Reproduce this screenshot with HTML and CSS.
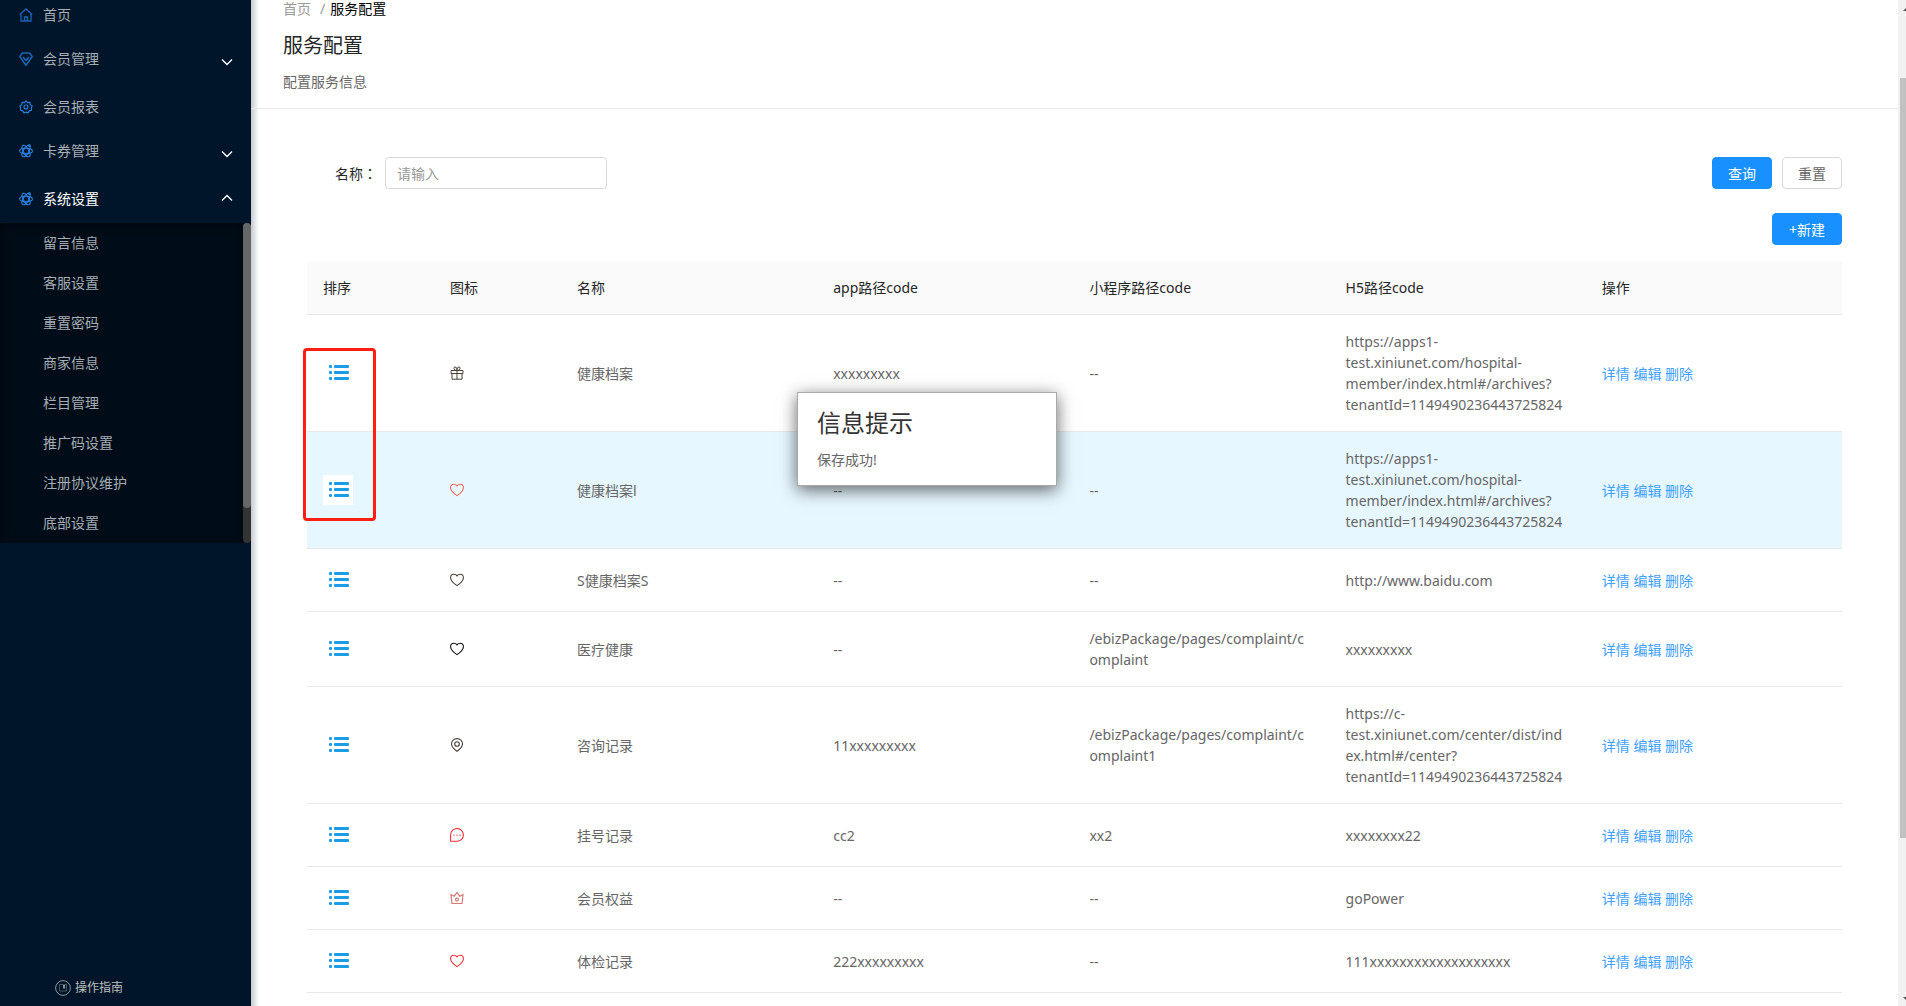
FILE: index.html
```html
<!DOCTYPE html>
<html lang="zh-CN">
<head>
<meta charset="utf-8">
<title>服务配置</title>
<link rel="stylesheet" href="styles.css">
</head>
<body>
<svg class="sprite" aria-hidden="true">
  <symbol id="i-home" viewBox="0 0 14 14"><path d="M.8 6.600 7 1l6.200 5.600M2 5.600v7.400h10V5.600M5.500 13V9h3v4" fill="none" stroke="currentColor" stroke-width="1.300"/></symbol>
  <symbol id="i-diamond" viewBox="0 0 14 14"><path d="M3.400 1h7.200L13.200 4.600 7 13.200.8 4.600zM4 5l3 3.400L10 5" fill="none" stroke="currentColor" stroke-width="1.600" stroke-linejoin="round"/></symbol>
  <symbol id="i-gear" viewBox="0 0 14 14"><path d="M7 .9 8.500 2.600 10.800 2.200 11.200 4.600 13.200 6 12.300 8 12.500 10.300 10.300 10.900 9 12.900 7 12 5 12.900 3.700 10.900 1.500 10.300 1.700 8 .8 6 2.800 4.600 3.200 2.200 5.500 2.600z" fill="none" stroke="currentColor" stroke-width="1.100" stroke-linejoin="round"/><circle cx="7" cy="7" r="2" fill="none" stroke="currentColor" stroke-width="1.100"/></symbol>
  <symbol id="i-atom" viewBox="0 0 14 14"><g fill="none" stroke="currentColor" stroke-width="1.100"><ellipse cx="7" cy="7" rx="6.400" ry="2.700"/><ellipse cx="7" cy="7" rx="6.400" ry="2.700" transform="rotate(60 7 7)"/><ellipse cx="7" cy="7" rx="6.400" ry="2.700" transform="rotate(120 7 7)"/></g><circle cx="10.400" cy="1.600" r="1.400" fill="currentColor"/></symbol>
  <symbol id="i-down" viewBox="0 0 12 12"><path d="m1 3.500 5 5 5-5" fill="none" stroke="currentColor" stroke-width="1.400"/></symbol>
  <symbol id="i-up" viewBox="0 0 12 12"><path d="m1 8.500 5-5 5 5" fill="none" stroke="currentColor" stroke-width="1.400"/></symbol>
  <symbol id="i-list" viewBox="0 0 30 30"><g fill="currentColor"><rect x="6" y="7" width="3" height="3" rx="1"/><rect x="11" y="7" width="15" height="3" rx="1"/><rect x="6" y="13" width="3" height="3" rx="1"/><rect x="11" y="13" width="15" height="3" rx="1"/><rect x="6" y="19" width="3" height="3" rx="1"/><rect x="11" y="19" width="15" height="3" rx="1"/></g></symbol>
  <symbol id="i-heart" viewBox="0 0 14 14"><path d="M7 12.600C3.400 10.100.6 7.700.6 4.700.6 2.800 2.100 1.300 3.900 1.300 5.200 1.300 6.300 1.900 7 2.900 7.700 1.900 8.800 1.300 10.100 1.300c1.800 0 3.300 1.500 3.300 3.400 0 3-2.800 5.400-6.400 7.900z" fill="none" stroke="currentColor" stroke-width="1.100"/></symbol>
  <symbol id="i-gift" viewBox="0 0 14 14"><path d="M1 4.500h12v3H1zM2 7.500h10v5.700H2zM7 4v9.200M7 4.500C3.500 4.500 3.200 1 5 1s2 1.500 2 3.500c0-2 .2-3.500 2-3.500s1.500 3.500-2 3.500" fill="none" stroke="currentColor"/></symbol>
  <symbol id="i-pin" viewBox="0 0 14 14"><path d="M7 13.400C3.500 10.600 1.500 8.600 1.500 5.900a5.500 5.300 0 0 1 11 0c0 2.700-2 4.700-5.500 7.500z" fill="none" stroke="currentColor" stroke-width="1.100"/><circle cx="7" cy="6" r="2.300" fill="none" stroke="currentColor" stroke-width="1.100"/></symbol>
  <symbol id="i-message" viewBox="0 0 14 14"><path d="M.6 13.300V7A6.400 6.400 0 1 1 7 13.300z" fill="none" stroke="currentColor" stroke-width="1.100"/><path d="M3.200 6.500h1.500V8H3.200zM6.300 6.500h1.500V8H6.300zM9.400 6.500h1.500V8H9.400z" fill="currentColor" opacity=".6"/></symbol>
  <symbol id="i-crown" viewBox="0 0 14 14"><path d="M2 12.500 1 3.500l3.300 1.700L7 1.500l2.700 3.700L13 3.500l-1 9z" fill="none" stroke="currentColor" stroke-width="1.200"/><circle cx="7" cy="8.600" r="1.500" fill="none" stroke="currentColor" stroke-width="1.200"/></symbol>
  <symbol id="i-guide" viewBox="0 0 16 16"><circle cx="8" cy="8" r="7.400" fill="none" stroke="currentColor"/><path d="M4.500 4.500h7v6.500h-7z" fill="none" stroke="currentColor" opacity=".5"/><path d="M8 5h2v4L9 8 8 9z" fill="currentColor"/></symbol>
</svg>

<div class="app">
  <aside class="sidebar">
    <nav class="menu">
      <a class="menu-row leaf" href="#"><svg class="icon dim"><use href="#i-home"/></svg>首页</a>
      <button class="menu-row group" type="button"><svg class="icon dim"><use href="#i-diamond"/></svg>会员管理<svg class="arrow low"><use href="#i-down"/></svg></button>
      <a class="menu-row leaf" href="#"><svg class="icon"><use href="#i-gear"/></svg>会员报表</a>
      <button class="menu-row group" type="button"><svg class="icon"><use href="#i-atom"/></svg>卡券管理<svg class="arrow low"><use href="#i-down"/></svg></button>
      <button class="menu-row open" type="button" aria-expanded="true"><svg class="icon"><use href="#i-atom"/></svg>系统设置<svg class="arrow"><use href="#i-up"/></svg></button>
      <div class="submenu">
        <div class="submenu-items">
          <a href="#">留言信息</a>
          <a href="#">客服设置</a>
          <a href="#">重置密码</a>
          <a href="#">商家信息</a>
          <a href="#">栏目管理</a>
          <a href="#">推广码设置</a>
          <a href="#">注册协议维护</a>
          <a href="#">底部设置</a>
        </div>
        <div class="submenu-track"><div class="submenu-thumb"></div></div>
      </div>
    </nav>
    <a class="guide" href="#"><svg class="guide-icon"><use href="#i-guide"/></svg>操作指南</a>
  </aside>

  <main class="main">
    <header class="page-head">
      <nav class="crumbs"><a href="#">首页</a><span class="slash">/</span><span class="current">服务配置</span></nav>
      <h1>服务配置</h1>
      <p>配置服务信息</p>
    </header>

    <section class="content">
      <form class="search">
        <label for="name">名称<span lang="zh-TW" class="colon">：</span></label>
        <input id="name" type="text" placeholder="请输入">
        <div class="search-actions">
          <button class="btn primary" type="button">查询</button>
          <button class="btn" type="reset">重置</button>
        </div>
      </form>
      <div class="toolbar"><button class="btn primary" type="button">+新建</button></div>

      <table class="grid">
        <colgroup><col class="c-narrow"><col class="c-narrow"><col><col><col><col><col></colgroup>
        <thead>
          <tr><th>排序</th><th>图标</th><th>名称</th><th>app路径code</th><th>小程序路径code</th><th>H5路径code</th><th>操作</th></tr>
        </thead>
        <tbody>
          <tr>
            <td><svg class="drag"><use href="#i-list"/></svg></td>
            <td><svg class="icon brown"><use href="#i-gift"/></svg></td>
            <td>健康档案</td><td>xxxxxxxxx</td><td>--</td>
            <td>https://apps1-test.xiniunet.com/hospital-member/index.html#/archives?tenantId=1149490236443725824</td>
            <td><a href="#">详情</a> <a href="#">编辑</a> <a href="#">删除</a></td>
          </tr>
          <tr class="hover">
            <td><svg class="drag"><use href="#i-list"/></svg></td>
            <td><svg class="icon coral"><use href="#i-heart"/></svg></td>
            <td>健康档案l</td><td>--</td><td>--</td>
            <td>https://apps1-test.xiniunet.com/hospital-member/index.html#/archives?tenantId=1149490236443725824</td>
            <td><a href="#">详情</a> <a href="#">编辑</a> <a href="#">删除</a></td>
          </tr>
          <tr>
            <td><svg class="drag"><use href="#i-list"/></svg></td>
            <td><svg class="icon brown"><use href="#i-heart"/></svg></td>
            <td>S健康档案S</td><td>--</td><td>--</td><td>http://www.baidu.com</td>
            <td><a href="#">详情</a> <a href="#">编辑</a> <a href="#">删除</a></td>
          </tr>
          <tr>
            <td><svg class="drag"><use href="#i-list"/></svg></td>
            <td><svg class="icon black"><use href="#i-heart"/></svg></td>
            <td>医疗健康</td><td>--</td><td>/ebizPackage/pages/complaint/c<br>omplaint</td><td>xxxxxxxxx</td>
            <td><a href="#">详情</a> <a href="#">编辑</a> <a href="#">删除</a></td>
          </tr>
          <tr>
            <td><svg class="drag"><use href="#i-list"/></svg></td>
            <td><svg class="icon brown"><use href="#i-pin"/></svg></td>
            <td>咨询记录</td><td>11xxxxxxxxx</td><td>/ebizPackage/pages/complaint/c<br>omplaint1</td>
            <td>https://c-test.xiniunet.com/center/dist/index.html#/center?tenantId=1149490236443725824</td>
            <td><a href="#">详情</a> <a href="#">编辑</a> <a href="#">删除</a></td>
          </tr>
          <tr>
            <td><svg class="drag"><use href="#i-list"/></svg></td>
            <td><svg class="icon red"><use href="#i-message"/></svg></td>
            <td>挂号记录</td><td>cc2</td><td>xx2</td><td>xxxxxxxx22</td>
            <td><a href="#">详情</a> <a href="#">编辑</a> <a href="#">删除</a></td>
          </tr>
          <tr>
            <td><svg class="drag"><use href="#i-list"/></svg></td>
            <td><svg class="icon rose"><use href="#i-crown"/></svg></td>
            <td>会员权益</td><td>--</td><td>--</td><td>goPower</td>
            <td><a href="#">详情</a> <a href="#">编辑</a> <a href="#">删除</a></td>
          </tr>
          <tr>
            <td><svg class="drag"><use href="#i-list"/></svg></td>
            <td><svg class="icon red"><use href="#i-heart"/></svg></td>
            <td>体检记录</td><td>222xxxxxxxxx</td><td>--</td><td>111xxxxxxxxxxxxxxxxxxx</td>
            <td><a href="#">详情</a> <a href="#">编辑</a> <a href="#">删除</a></td>
          </tr>
        </tbody>
      </table>
    </section>
    <div class="marker"></div>
    <div class="notice" role="alert"><h2>信息提示</h2><p>保存成功!</p></div>
  </main>

  <div class="page-scroll"><span class="tri up"></span><div class="page-thumb"></div><span class="tri down"></span></div>
</div>
</body>
</html>
```

FILE: styles.css
```css
* { box-sizing: border-box; }

body {
  margin: 0;
  overflow: hidden;
  background: #fff;
  color: #666;
  font: 14px/21px "Noto Sans", "Noto Sans CJK SC", sans-serif;
}

h1, h2, p { margin: 0; font-weight: 400; }
a { color: inherit; text-decoration: none; }
button, input { font: inherit; }
.sprite { position: absolute; width: 0; height: 0; }
.icon { width: 14px; height: 14px; flex: none; }

.app {
  display: grid;
  grid-template-columns: 251px 1fr 8px;
  height: 100vh;
}

/* sidebar */
.sidebar {
  display: flex;
  flex-direction: column;
  justify-content: space-between;
  overflow: hidden;
  background: #001529;
  color: #a6adb4;
}
.menu { display: flex; flex-direction: column; margin-top: -6px; }
.menu-row {
  display: flex;
  align-items: center;
  gap: 10px;
  height: 40px;
  padding: 0 18px 0 19px;
  border: 0;
  background: none;
  color: inherit;
  text-align: left;
}
.menu-row .icon { margin-top: 2px; color: #2b83e6; }
.menu-row .icon.dim { color: #1b66b5; }
.leaf { margin-bottom: 4px; }
.group { margin-bottom: 8px; }
.open { margin-bottom: 5px; color: #fff; }
.arrow { width: 12px; height: 12px; margin-left: auto; color: #fff; }
.arrow.low { margin-top: 8px; }

.submenu { display: grid; grid-template-columns: 1fr 8px; background: #000c17; }
.submenu-items { box-shadow: inset 0 2px 8px rgba(0, 0, 0, .45); }
.submenu-items a { display: block; padding-left: 43px; line-height: 40px; }
.submenu-track { border-radius: 4px; background: #333; }
.submenu-thumb { height: 89%; border-radius: 4px; background: #666; }

.guide {
  display: flex;
  align-items: center;
  gap: 4px;
  padding: 0 0 8px 55px;
  font-size: 12px;
  color: #bfbfbf;
}
.guide-icon { width: 16px; height: 16px; color: #8c959d; }

/* page */
.main {
  position: relative;
  min-width: 0;
  overflow: hidden;
  background: linear-gradient(90deg, #c6cbd0, #fff 8px);
}
.page-head { padding: 0 32px 15px; border-bottom: 1px solid #e8e8e8; }
.crumbs { display: flex; line-height: 18px; color: #999; }
.slash { margin: 0 5px 0 9px; }
.current { color: #000; }
.page-head h1 { margin: 14px 0 11px; font-size: 20px; line-height: 28px; color: #262626; }
.page-head p { line-height: 22px; }

.content { padding: 48px 56px 0; }
.search { display: flex; align-items: center; padding-left: 28px; color: #262626; }
.search label { width: 50px; }
.colon { font-family: "Noto Sans CJK TC", sans-serif; }
.search input {
  width: 222px;
  height: 32px;
  padding: 0 11px;
  border: 1px solid #d9d9d9;
  border-radius: 4px;
}
.search input::placeholder { color: #999; }
.search-actions { display: flex; gap: 10px; margin-left: auto; }
.btn {
  height: 32px;
  padding: 0 15px;
  border: 1px solid #d9d9d9;
  border-radius: 4px;
  background: #fff;
  color: #666;
}
.btn.primary { border-color: #1890ff; background: #1890ff; color: #fff; }
.toolbar { display: flex; justify-content: flex-end; margin: 24px 0 16px; }
.toolbar .btn { padding: 0 16px; }

.grid { width: 100%; border-collapse: separate; border-spacing: 0; table-layout: fixed; }
.c-narrow { width: 127px; }
.grid th, .grid td {
  padding: 16px;
  border-bottom: 1px solid #e8e8e8;
  text-align: left;
  overflow-wrap: break-word;
}
.grid th { background: #fafafa; color: #262626; font-weight: 400; }
.grid td a { color: #40a0ff; }
.grid svg { display: block; }
.hover td { background: #e6f7ff; }
.drag { width: 30px; height: 30px; background: #fff; color: #1b9de6; }
.brown { color: #4a4038; }
.black { color: #111; }
.coral { color: #ee6a5c; }
.red { color: #f5333a; }
.rose { color: #d67a7a; }

/* overlays */
.marker {
  position: absolute;
  left: 52px;
  top: 348px;
  width: 73px;
  height: 173px;
  border: 3px solid #ff1e12;
  border-radius: 4px;
}
.notice {
  position: absolute;
  left: 546px;
  top: 392px;
  width: 260px;
  height: 94px;
  padding: 14px 19px;
  border: 1px solid #aaa;
  background: #fff;
  box-shadow: 0 4px 16px rgba(0, 0, 0, .6);
}
.notice h2 { margin-bottom: 10px; font-size: 24px; line-height: 32px; color: #333; }

.page-scroll {
  display: flex;
  flex-direction: column;
  align-items: flex-end;
  justify-content: space-between;
  padding: 8px 0 6px;
  overflow: hidden;
  background: #f1f1f1;
}
.page-thumb { width: 6px; height: 760px; margin: 67px 0 auto; background: #c1c1c1; }
.tri { width: 3px; height: 3px; background: #505050; }
.tri.up { clip-path: polygon(100% 0, 100% 100%, 0 100%); }
.tri.down { clip-path: polygon(0 0, 100% 0, 100% 100%); }
```
